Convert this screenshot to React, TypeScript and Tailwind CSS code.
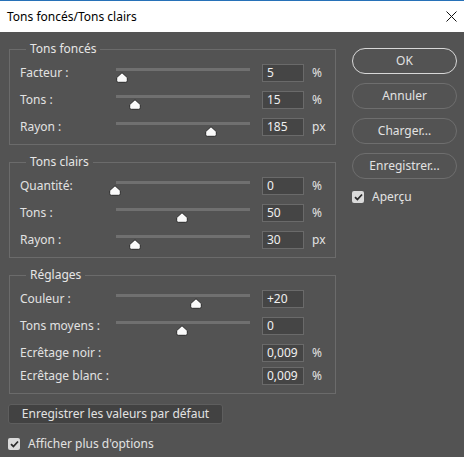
import React from "react";

type SliderRow = {
  label: string;
  value: string;
  unit?: string;
  thumb?: number; // px offset of thumb centre from track start
};

const GROUPS: { title: string; rows: SliderRow[]; tail?: SliderRow[] }[] = [
  {
    title: "Tons foncés",
    rows: [
      { label: "Facteur :", value: "5", unit: "%", thumb: 6 },
      { label: "Tons :", value: "15", unit: "%", thumb: 19 },
      { label: "Rayon :", value: "185", unit: "px", thumb: 95 },
    ],
  },
  {
    title: "Tons clairs",
    rows: [
      { label: "Quantité:", value: "0", unit: "%", thumb: -1 },
      { label: "Tons :", value: "50", unit: "%", thumb: 66 },
      { label: "Rayon :", value: "30", unit: "px", thumb: 19 },
    ],
  },
  {
    title: "Réglages",
    rows: [
      { label: "Couleur :", value: "+20", thumb: 80 },
      { label: "Tons moyens :", value: "0", thumb: 66 },
    ],
    tail: [
      { label: "Ecrêtage noir :", value: "0,009", unit: "%" },
      { label: "Ecrêtage blanc :", value: "0,009", unit: "%" },
    ],
  },
];

const Thumb = () => (
  <svg width="12" height="11" viewBox="0 0 12 11" className="block">
    <path
      d="M6 0.7 L11.3 5.6 V8.8 Q11.3 10.3 9.8 10.3 H2.2 Q0.7 10.3 0.7 8.8 V5.6 Z"
      fill="#fafafa"
      stroke="#2a2a2a"
      strokeWidth="1"
    />
  </svg>
);

const Check = ({ label }: { label: string }) => (
  <label className="flex items-center gap-2">
    <span className="w-[12px] h-[12px] rounded-[2px] bg-[#dadada] flex items-center justify-center">
      <svg width="9" height="8" viewBox="0 0 9 8">
        <path d="M1 4.2 L3.4 6.5 L8 1.5" fill="none" stroke="#2b2b2b" strokeWidth="1.8" />
      </svg>
    </span>
    <span>{label}</span>
  </label>
);

const ValueBox = ({ value }: { value: string }) => (
  <div className="w-[42px] h-[18px] bg-[#454545] border border-[#6a6a6a] px-[4px] leading-[16px] text-[#f0f0f0]">
    {value}
  </div>
);

const Row = ({ row, slider }: { row: SliderRow; slider: boolean }) => (
  <div className="flex items-center h-[18px]">
    <span className="w-[96px] shrink-0">{row.label}</span>
    <div className="relative w-[134px] h-[18px] shrink-0">
      {slider && (
        <>
          <div className="absolute left-0 right-0 top-[4px] h-[3px] bg-[#707070]" />
          <div
            className="absolute top-[8px]"
            style={{ left: (row.thumb ?? 0) - 6 }}
          >
            <Thumb />
          </div>
        </>
      )}
    </div>
    <div className="ml-[12px]">
      <ValueBox value={row.value} />
    </div>
    {row.unit && <span className="ml-[8px]">{row.unit}</span>}
  </div>
);

const Group = ({
  title,
  rows,
  tail,
}: {
  title: string;
  rows: SliderRow[];
  tail?: SliderRow[];
}) => (
  <fieldset className="border border-[#6b6b6b] pl-[10px] pt-[7px] pb-[8px] flex flex-col gap-[9px]">
    <legend className="ml-[6px] px-[4px] leading-[16px] text-[#e6e6e6]">
      {title}
    </legend>
    <div className="flex flex-col gap-[9px]">
      {rows.map((r) => (
        <Row key={r.label + r.value} row={r} slider />
      ))}
    </div>
    {tail && (
      <div className="flex flex-col gap-[5px]">
        {tail.map((r) => (
          <Row key={r.label} row={r} slider={false} />
        ))}
      </div>
    )}
  </fieldset>
);

const RoundButton = ({ label, primary }: { label: string; primary?: boolean }) => (
  <button
    className={`w-[105px] h-[26px] rounded-full border text-center ${
      primary ? "border-[#d8d8d8]" : "border-[#6e6e6e]"
    }`}
  >
    {label}
  </button>
);

const App = () => (
  <div
    className="w-[464px] h-[457px] flex flex-col bg-[#535353] text-[12px] text-[#e2e2e2] overflow-hidden"
    style={{ fontFamily: '"Noto Sans", "Liberation Sans", sans-serif' }}
  >
    {/* title bar */}
    <div className="h-[32px] shrink-0 bg-white border-t border-[#2771b8] flex items-center justify-between pl-[7px] pr-[7px] text-black">
      <span>Tons foncés/Tons clairs</span>
      <svg width="11" height="11" viewBox="0 0 11 11">
        <path d="M0.5 0.5 L10.5 10.5 M10.5 0.5 L0.5 10.5" stroke="#111" strokeWidth="1" />
      </svg>
    </div>

    <div className="flex pt-[9px]">
      <div className="w-[336px] pl-[9px] flex flex-col gap-[9px]">
        {GROUPS.map((g) => (
          <Group key={g.title} title={g.title} rows={g.rows} tail={g.tail} />
        ))}
      </div>

      <div className="ml-[16px] pt-[7px] flex flex-col gap-[9px]">
        <RoundButton label="OK" primary />
        <RoundButton label="Annuler" />
        <RoundButton label="Charger..." />
        <RoundButton label="Enregistrer..." />
        <Check label="Aperçu" />
      </div>
    </div>

    <div className="pl-[8px] pt-[10px] flex flex-col gap-[11px]">
      <button className="w-[215px] h-[20px] bg-[#424242] border border-[#5e5e5e] rounded-[3px] leading-[18px]">
        Enregistrer les valeurs par défaut
      </button>
      <Check label="Afficher plus d'options" />
    </div>
  </div>
);

export default App;
